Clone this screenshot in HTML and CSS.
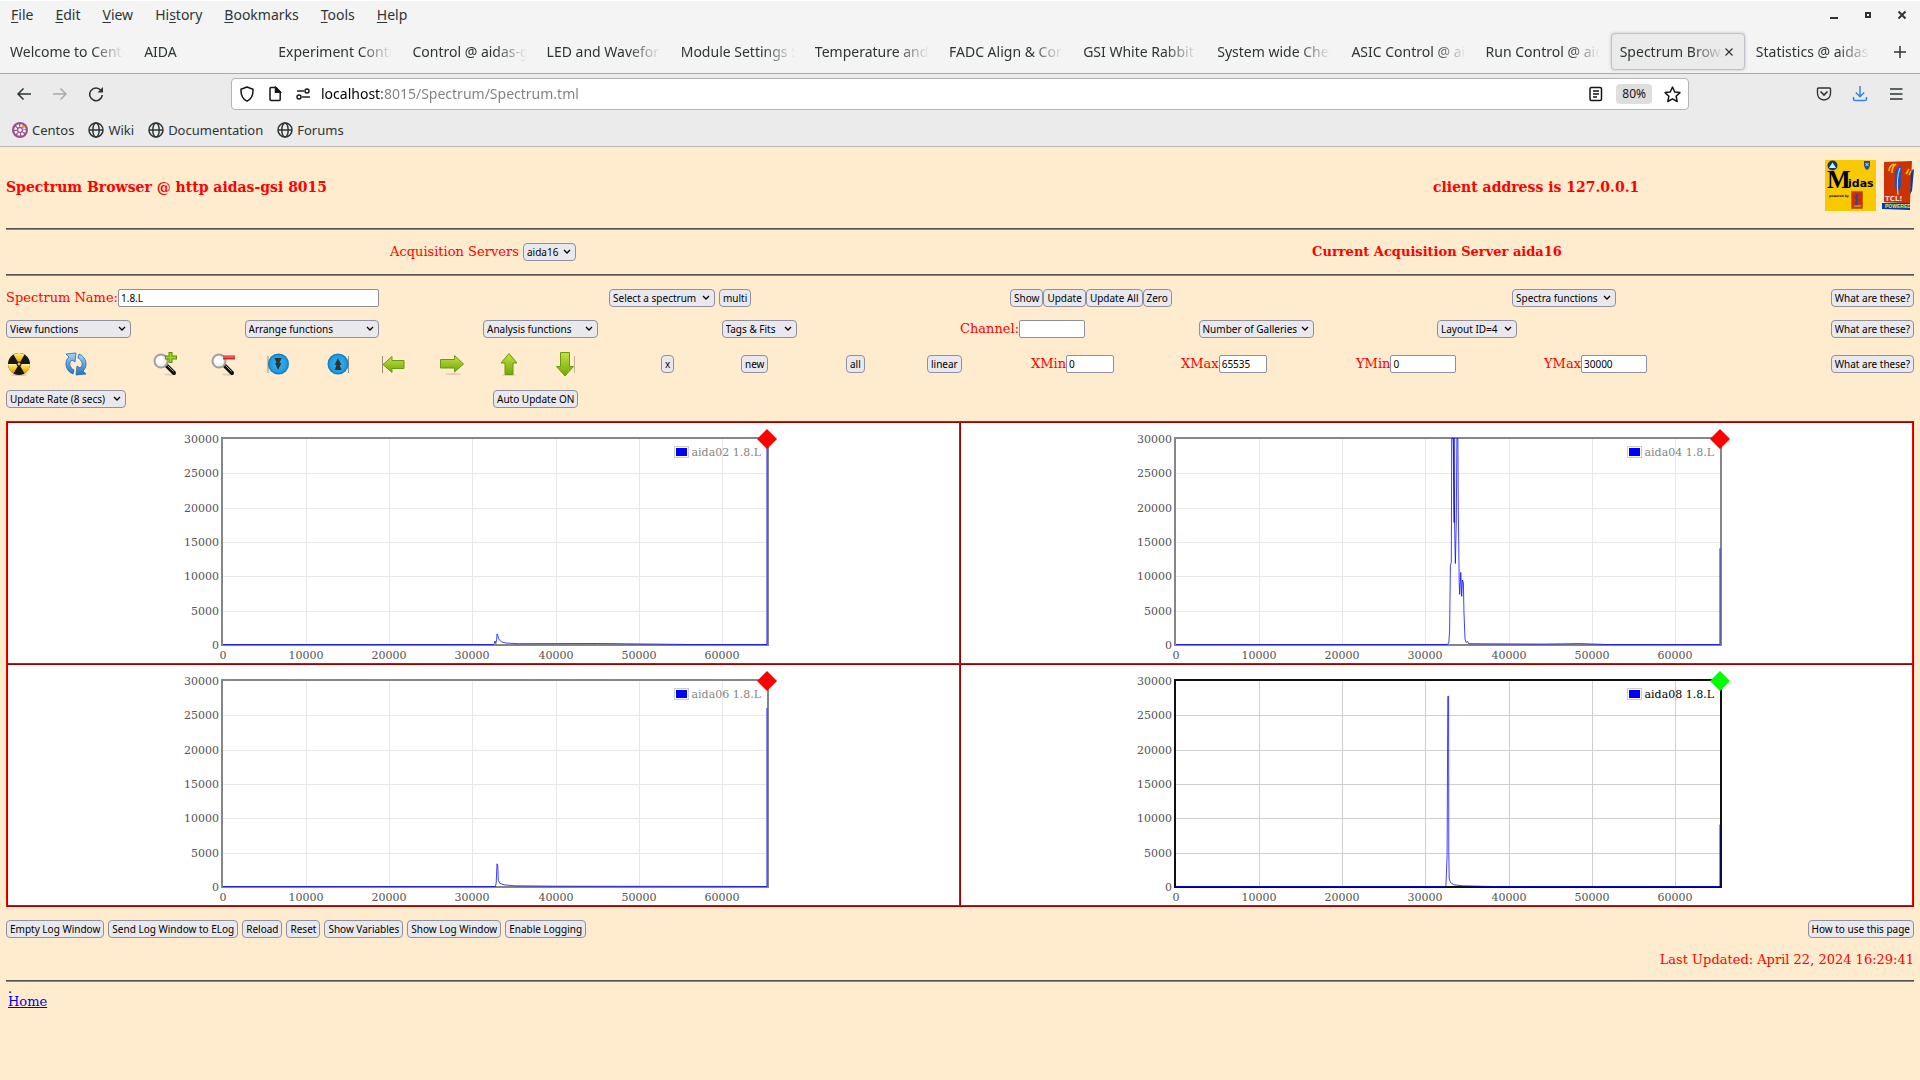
FILE: index.html
```html
<!DOCTYPE html>
<html lang="en">
<head>
<meta charset="utf-8">
<title>Spectrum Browser @ aidas-gsi</title>
<link rel="stylesheet" href="styles.css">
</head>
<body>
<svg width="0" height="0" class="defs" aria-hidden="true">
  <defs>
    <symbol id="globe" viewBox="0 0 16 16"><g fill="none" stroke="#2e3436" stroke-width="1.5"><circle cx="8" cy="8" r="7"/><ellipse cx="8" cy="8" rx="3.2" ry="7"/><path d="M1 8h14"/></g></symbol>
    <linearGradient id="green" x1="0" y1="0" x2="0" y2="1"><stop offset="0" stop-color="#c4e23c"/><stop offset="1" stop-color="#6fa80c"/></linearGradient>
    <linearGradient id="blue" x1="0" y1="0" x2="0" y2="1"><stop offset="0" stop-color="#a4d6fa"/><stop offset="1" stop-color="#2472c0"/></linearGradient>
    <radialGradient id="disc"><stop offset="0" stop-color="#35b5f2"/><stop offset=".75" stop-color="#1f9fe4"/><stop offset="1" stop-color="#1473b4"/></radialGradient>
    <linearGradient id="amber" x1="0" y1="0" x2="0" y2="1"><stop offset="0" stop-color="#fff0a0"/><stop offset=".5" stop-color="#f7c51b"/><stop offset="1" stop-color="#d99a08"/></linearGradient>
    <symbol id="lens" viewBox="0 0 24 24"><ellipse cx="17" cy="22.5" rx="6" ry="1" fill="#000" opacity=".12"/><path d="M14 14l7 7" stroke="#111" stroke-width="4" stroke-linecap="round"/><path d="M14.500 13.500l6 6" stroke="#aaa" stroke-width="1"/><circle cx="8" cy="9" r="6.500" fill="#f2f2f2" stroke="#a3a09c" stroke-width="2"/><circle cx="7" cy="8" r="3.500" fill="#fff"/></symbol>
  </defs>
</svg>

<header class="chrome">
  <div class="menubar">
    <nav class="menus">
      <button><u>F</u>ile</button><button><u>E</u>dit</button><button><u>V</u>iew</button><button>Hi<u>s</u>tory</button><button><u>B</u>ookmarks</button><button><u>T</u>ools</button><button><u>H</u>elp</button>
    </nav>
    <div class="window-buttons">
      <button aria-label="Minimize"><svg width="10" height="10"><path d="M1 8h8" stroke="#2e3436" stroke-width="2"/></svg></button>
      <button aria-label="Restore"><svg width="10" height="10"><path d="M3 3h4v4h-4z" fill="none" stroke="#2e3436" stroke-width="2"/></svg></button>
      <button aria-label="Close window"><svg width="10" height="10"><path d="M1.500 1.500l7 7m0-7l-7 7" stroke="#2e3436" stroke-width="2"/></svg></button>
    </div>
  </div>
  <div class="tabs">
    <button class="tab"><span>Welcome to CentOS</span></button>
    <button class="tab"><span>AIDA</span></button>
    <button class="tab"><span>Experiment Control</span></button>
    <button class="tab"><span>Control @ aidas-gsi</span></button>
    <button class="tab"><span>LED and Waveform</span></button>
    <button class="tab"><span>Module Settings S</span></button>
    <button class="tab"><span>Temperature and s</span></button>
    <button class="tab"><span>FADC Align &amp; Cont</span></button>
    <button class="tab"><span>GSI White Rabbit T</span></button>
    <button class="tab"><span>System wide Check</span></button>
    <button class="tab"><span>ASIC Control @ aid</span></button>
    <button class="tab"><span>Run Control @ aida</span></button>
    <button class="tab active"><span>Spectrum Brows</span><svg width="10" height="10"><path d="M1.500 1.500l7 7m0-7l-7 7" stroke="#2e3436" stroke-width="1.200"/></svg></button>
    <button class="tab"><span>Statistics @ aidas-</span></button>
    <button class="new-tab" aria-label="New tab"><svg width="14" height="14"><path d="M7 1v12M1 7h12" stroke="#2e3436" stroke-width="1.500"/></svg></button>
  </div>
  <div class="navbar">
    <div class="nav-left">
      <button aria-label="Back"><svg width="16" height="16" fill="none" stroke="#2e3436" stroke-width="1.500"><path d="M15 8H2M7.500 2.500L2 8l5.500 5.500"/></svg></button>
      <button aria-label="Forward"><svg width="16" height="16" fill="none" stroke="#a9abac" stroke-width="1.500"><path d="M1 8h13M8.500 2.500L14 8l-5.500 5.500"/></svg></button>
      <button aria-label="Reload"><svg width="16" height="16" fill="none" stroke="#2e3436" stroke-width="1.600"><path d="M13 4.500A6.300 6.300 0 1 0 14.300 9"/><path d="M9.500 6.500h5.500V1z" fill="#2e3436" stroke="none"/></svg></button>
    </div>
    <div class="urlbar">
      <svg width="16" height="16" fill="none" stroke="#15141a" stroke-width="1.500"><path d="M8 1L14 3.300C14.300 9 12.500 13 8 15.200C3.500 13 1.700 9 2 3.300Z" stroke-linejoin="round"/></svg>
      <svg width="16" height="16" fill="none" stroke="#15141a" stroke-width="1.500"><path d="M3 2.500q0-1 1-1h5l4.200 4.200v7.800q0 1-1 1H4q-1 0-1-1z"/><path d="M8.500 1.500v4.700h4.700z" fill="#15141a"/></svg>
      <svg width="16" height="16" fill="none" stroke="#15141a" stroke-width="1.400"><circle cx="12" cy="5" r="2"/><path d="M2 5h7"/><circle cx="4" cy="11" r="2"/><path d="M7 11h8"/></svg>
      <input class="url" type="text" aria-label="Address" value="localhost:8015/Spectrum/Spectrum.tml">
      <svg width="16" height="16" fill="none" stroke="#15141a" stroke-width="1.500"><rect x="2" y="1.500" width="11.500" height="13" rx="1.500"/><path d="M5 5h6M5 8h6M5 11h4" stroke-width="1.300"/></svg>
      <button class="zoom">80%</button>
      <svg width="17" height="17" viewBox="0 0 16 16" fill="none" stroke="#15141a" stroke-width="1.400" stroke-linejoin="round"><path d="M8 1l2.100 4.600 4.900.6-3.600 3.400 1 5L8 12.100l-4.400 2.500 1-5L1 6.200l4.900-.6z"/></svg>
    </div>
    <div class="nav-right">
      <button aria-label="Save to Pocket"><svg width="16" height="16" fill="none" stroke="#2e3436" stroke-width="1.400"><path d="M2.500 2h11q1 0 1 1v4.500c0 3.500-2.500 6.500-6.500 6.500S1.500 11 1.500 7.500V3q0-1 1-1z"/><path d="M5 6l3 3 3-3" stroke-width="1.700" stroke-linecap="round"/></svg></button>
      <button aria-label="Downloads"><svg width="16" height="16" fill="none" stroke="#3584e4" stroke-width="1.500"><path d="M8 0v10.500M3.800 6.500L8 10.700l4.200-4.200M1.500 11v2q0 1.500 1.500 1.500h10q1.500 0 1.500-1.500v-2"/></svg></button>
      <button aria-label="Application menu"><svg width="16" height="16" stroke="#2e3436" stroke-width="1.500"><path d="M2 3h12.500M2 8h12.500M2 13h12.500"/></svg></button>
    </div>
  </div>
  <nav class="bookmarks">
    <a href="#centos"><svg width="16" height="16"><circle cx="8" cy="8" r="8" fill="#a14f8c"/><circle cx="8" cy="8" r="4.500" fill="none" stroke="#fff" stroke-width="2.600" stroke-dasharray="2.200 1.300"/><circle cx="8" cy="8" r="1.800" fill="#fff"/><path d="M10 3.500l2.500 2.500" stroke="#efa724" stroke-width="2"/></svg>Centos</a>
    <a href="#wiki"><svg width="16" height="16"><use href="#globe"/></svg>Wiki</a>
    <a href="#docs"><svg width="16" height="16"><use href="#globe"/></svg>Documentation</a>
    <a href="#forums"><svg width="16" height="16"><use href="#globe"/></svg>Forums</a>
  </nav>
</header>

<main class="page">
  <div class="masthead">
    <h1>Spectrum Browser @ http aidas-gsi 8015</h1>
    <h2>client address is 127.0.0.1</h2>
    <div class="logos">
      <svg width="51" height="51" viewBox="0 0 51 51">
        <rect width="51" height="51" fill="#f9c900"/>
        <circle cx="7.500" cy="5.500" r="5" fill="#123a70"/><path d="M4 8l3.500-5.500L11 8z" fill="#dceaf5"/>
        <path d="M39 1h6v5q-1 3-3 4-2-1-3-4z" fill="#24508c"/><path d="M40.500 3l3 3m0-3l-3 3" stroke="#dceaf5"/>
        <text x="2" y="28" class="logo-m">M</text><text x="23" y="27" class="logo-rest">idas</text>
        <text x="4" y="37" class="logo-small">powered by</text>
        <rect x="26.500" y="31.500" width="11" height="17" fill="#cf3000" stroke="#a05000" stroke-width=".5"/><path d="M33 34q-3 2-1 6-1 3-1 6" fill="none" stroke="#2349a8" stroke-width="2"/><path d="M29 46h7" stroke="#f9c900"/>
      </svg>
      <svg width="32" height="51" viewBox="0 0 32 51">
        <path d="M0 43l28-1v8L0 49z" fill="#0b3c9c"/><path d="M2 2l28-1-2 42-26-1z" fill="#cd3301"/>
        <path d="M29 11l3-2-2 22-2 3z" fill="#0b3c9c"/>
        <path d="M7 11q0-5 5-7M10 13q0-7 4-9M24 14l3-5M27 15l2-4" fill="none" stroke="#f5c51c" stroke-width="1.500"/>
        <path d="M19 6q-8 3-6 12-2 9 3 14 4-6 3-12 1-8 0-14z" fill="#2355b5"/><path d="M18 8q-4 10-2 27" fill="none" stroke="#cfe0f5" stroke-width="1"/>
        <text x="3" y="41" class="logo-tcl">TCL!</text><text x="3" y="48" class="logo-powered">POWERED</text>
      </svg>
    </div>
  </div>
  <hr>
  <div class="servers">
    <div><label for="server">Acquisition Servers</label> <select id="server"><option>aida16</option></select></div>
    <strong>Current Acquisition Server aida16</strong>
  </div>
  <hr>
  <div class="row row-name">
    <div><label for="name">Spectrum Name:</label><input id="name" class="w-name" type="text" value="1.8.L"></div>
    <div class="spaced"><select class="w-spectrum" aria-label="Spectrum"><option>Select a spectrum</option></select><button>multi</button></div>
    <div><button>Show</button><button>Update</button><button>Update All</button><button>Zero</button></div>
    <div><select class="w-spectra" aria-label="Spectra functions"><option>Spectra functions</option></select></div>
    <div class="end"><button>What are these?</button></div>
  </div>
  <div class="row row-functions">
    <div><select class="w-view" aria-label="View"><option>View functions</option></select></div>
    <div><select class="w-arrange" aria-label="Arrange"><option>Arrange functions</option></select></div>
    <div><select class="w-analysis" aria-label="Analysis"><option>Analysis functions</option></select></div>
    <div><select class="w-tags" aria-label="Tags and fits"><option>Tags &amp; Fits</option></select></div>
    <div><label for="channel">Channel:</label><input id="channel" class="w-medium" type="text"></div>
    <div><select class="w-galleries" aria-label="Galleries"><option>Number of Galleries</option></select></div>
    <div><select class="w-layout" aria-label="Layout"><option>Layout ID=4</option></select></div>
    <div class="end"><button>What are these?</button></div>
  </div>
  <div class="row row-tools">
    <div><button class="icon" aria-label="Zero spectra"><svg width="24" height="24"><ellipse cx="13" cy="23" rx="8" ry="1" fill="#000" opacity=".15"/><g transform="translate(1 0)"><circle cx="12" cy="12" r="11" fill="#181818"/><g fill="url(#amber)"><path d="M12 12L6.500 2.500a11 11 0 0 1 11 0z"/><path d="M12 12H1a11 11 0 0 0 5.500 9.500z"/><path d="M12 12h11a11 11 0 0 1-5.500 9.500z"/></g><circle cx="12" cy="12" r="2.500" fill="#181818"/><circle cx="12" cy="12" r="1.400" fill="#f7c51b"/></g></svg></button></div>
    <div><button class="icon" aria-label="Refresh"><svg width="24" height="24" fill="url(#blue)" stroke="#2468ae" stroke-width=".8"><path d="M9 22C1 19 0 9 5 5L2 2l10-1-1 9-3-2c-4 3-2 8 2 10z"/><path d="M15 2c8 3 9 13 4 17l3 3-10 1 1-9 3 2c4-3 2-8-2-10z"/></svg></button></div>
    <div><button class="icon" aria-label="Zoom in"><svg width="24" height="24"><use href="#lens"/><path d="M17.500 0v11M12 5.500h12" stroke="#5c8e0a" stroke-width="4"/><path d="M17.500 1v9M13 5.500h10" stroke="#a4d41c" stroke-width="2"/></svg></button></div>
    <div><button class="icon" aria-label="Zoom out"><svg width="24" height="24"><use href="#lens"/><path d="M12 5.500h12" stroke="#c03030" stroke-width="4"/><path d="M12 5h12" stroke="#ef5350" stroke-width="2"/></svg></button></div>
    <div><button class="icon" aria-label="Compress"><svg width="24" height="24"><path d="M2 4v17" stroke="#9a8c78"/><circle cx="12.500" cy="12" r="10.500" fill="url(#disc)"/><path d="M8.500 6h7l-2 5h2l-3.500 7-3-7h1.500z" fill="#333"/></svg></button></div>
    <div><button class="icon" aria-label="Expand"><svg width="24" height="24"><path d="M22.500 4v17" stroke="#9a8c78"/><circle cx="12" cy="12" r="10.500" fill="url(#disc)"/><path d="M8.500 18h7l-2-5h2L12 6l-3.500 7h2z" fill="#333"/></svg></button></div>
    <div><button class="icon" aria-label="Move left"><svg width="24" height="24"><path d="M1.500 4v17" stroke="#9a8c78"/><path d="M2 12.500l9-8v4h12v8H11v4z" fill="url(#green)" stroke="#6a980e"/></svg></button></div>
    <div><button class="icon" aria-label="Move right"><svg width="24" height="24"><ellipse cx="13" cy="22" rx="8" ry="1" fill="#000" opacity=".12"/><path d="M23.500 12l-9-8.500v4H.5v8.500h14v4z" fill="url(#green)" stroke="#6a980e"/></svg></button></div>
    <div><button class="icon" aria-label="Move up"><svg width="24" height="24"><ellipse cx="13" cy="23" rx="7" ry="1" fill="#000" opacity=".12"/><path d="M13 1.500l8 9.500h-4v11.500H9V11H5z" fill="url(#green)" stroke="#6a980e"/></svg></button></div>
    <div><button class="icon" aria-label="Move down"><svg width="24" height="24"><path d="M21.500 4v17" stroke="#c3b49c"/><path d="M12 24l8.500-9.500h-4V.5h-9v14h-4z" fill="url(#green)" stroke="#6a980e"/></svg></button></div>
    <div><button>x</button></div>
    <div><button>new</button></div>
    <div><button>all</button></div>
    <div><button>linear</button></div>
    <div><label for="xmin">XMin</label><input id="xmin" class="w-small" type="text" value="0"></div>
    <div><label for="xmax">XMax</label><input id="xmax" class="w-small" type="text" value="65535"></div>
    <div><label for="ymin">YMin</label><input id="ymin" class="w-medium" type="text" value="0"></div>
    <div><label for="ymax">YMax</label><input id="ymax" class="w-medium" type="text" value="30000"></div>
    <div class="end"><button>What are these?</button></div>
  </div>
  <div class="row row-update">
    <div><select class="w-rate" aria-label="Update rate"><option>Update Rate (8 secs)</option></select></div>
    <div><button>Auto Update ON</button></div>
  </div>

  <section class="gallery">
    <div class="cell" data-name="aida02 1.8.L" data-line="0,0 32500,0 32600,100 32700,500 32800,150 32900,700 32960,1550 33050,1300 33200,700 33500,400 34000,220 35500,120 45000,140 52000,60 56000,0 65400,0 65400,30000"></div>
    <div class="cell" data-name="aida04 1.8.L" data-line="0,0 32600,0 32800,200 32900,2000 33000,11500 33100,12000 33150,30000 33350,30000 33400,17800 33500,17800 33500,30000 33350,30000 33550,14000 33600,11800 33700,18000 33780,30000 33900,30000 33950,19500 34050,9000 34120,7300 34250,10500 34350,7000 34450,9400 34560,9000 34620,5000 34750,800 34900,300 35050,450 35200,120 44000,60 48500,130 52000,0 65400,0 65400,14000"></div>
    <div class="cell" data-name="aida06 1.8.L" data-line="0,0 32750,0 32850,500 32950,3300 33050,3000 33100,900 33300,450 33800,250 35000,100 40000,50 65400,0 65400,26000"></div>
    <div class="cell selected" data-name="aida08 1.8.L" data-line="0,0 32450,0 32550,3000 32600,4500 32680,27700 32780,27700 32800,5000 32850,1200 33000,600 33400,250 34500,100 38000,0 65400,0 65400,9000"></div>
  </section>

  <div class="log-bar">
    <button>Empty Log Window</button><button>Send Log Window to ELog</button><button>Reload</button><button>Reset</button><button>Show Variables</button><button>Show Log Window</button><button>Enable Logging</button><button class="help">How to use this page</button>
  </div>
  <p class="updated">Last Updated: April 22, 2024 16:29:41</p>
  <hr>
  <footer><p class="dot">.</p><a href="#home">Home</a></footer>
</main>
<script src="charts.js"></script>
</body>
</html>
```

FILE: styles.css
```css
* { box-sizing: border-box; }
body {
  margin: 0;
  min-height: 100vh;
  background: #ffebcd;
  color: #ff0000;
  font: 13px/16px "DejaVu Serif", serif;
}
button, select, input { font: 10px/14px "Noto Sans", sans-serif; color: #000; margin: 0; }
svg { display: block; flex: none; }
.defs { position: absolute; }

/* browser window */
.chrome { background: #ebebeb; border-bottom: 1px solid #b4b4b4; color: #2e3436; font: 14px/18px "Noto Sans", sans-serif; }
.chrome button { font: inherit; color: inherit; background: none; border: 0; padding: 0; }
.menubar { display: flex; justify-content: space-between; height: 31px; padding: 0 13px 2px 11px; background: #f4f4f4; border-top: 1px solid #fff; }
.menus { display: flex; gap: 22px; }
.menus u { text-underline-offset: 2px; }
.window-buttons { display: flex; gap: 24px; align-items: center; }
.tabs { display: flex; height: 43px; background: #f4f4f4; border-bottom: 1px solid #aaa; }
.chrome .tab { flex: 1 1 0; min-width: 0; display: flex; align-items: center; margin: 2px 1px 3px; padding: 0 8px; border: 1px solid transparent; border-radius: 4px; text-align: left; }
.tab span { flex: 1; overflow: hidden; white-space: nowrap; -webkit-mask-image: linear-gradient(to left, transparent, #000 32px); mask-image: linear-gradient(to left, transparent, #000 32px); }
.chrome .tab.active { padding-right: 10px; background: #ebebeb; border-color: #c3c0ca; box-shadow: 0 0 3px #bbb; }
.new-tab { width: 40px; display: flex; align-items: center; justify-content: center; }
.navbar { display: flex; align-items: center; height: 40px; }
.nav-left { display: flex; gap: 20px; width: 231px; padding-left: 16px; }
.urlbar { flex: 1; display: flex; align-items: center; gap: 12px; height: 32px; padding: 0 7px; background: #fff; border: 1px solid #b4b4b4; border-radius: 4px; }
.url { flex: 1; min-width: 0; border: 0; padding: 0; font-size: 14px; line-height: 20px; margin-right: 8px; margin-left: -2px; color: transparent; background: linear-gradient(to right, #000 61px, #7f7f7f 61px); -webkit-background-clip: text; background-clip: text; }
.chrome .zoom { padding: 0 6px; border-radius: 4px; background: #dedede; color: #15141a; font-size: 12px; line-height: 20px; }
.nav-right { display: flex; gap: 20px; width: 231px; padding-right: 16px; justify-content: flex-end; }
.bookmarks { display: flex; gap: 14px; height: 32px; align-items: center; padding: 0 0 1px 12px; font-size: 13px; }
.bookmarks a { display: flex; align-items: center; gap: 4px; color: inherit; text-decoration: none; }

/* page */
.page { padding: 13px 6px 0; }
h1, h2 { margin: 0; font-size: 14px; line-height: 18px; }
hr { height: 2px; margin: 0; border: 0; border-top: 1px solid #555; background: #858585; }
.masthead { display: grid; grid-template-columns: 1427fr 240fr 241fr; align-items: center; height: 68px; padding-bottom: 14px; }
.logos { display: flex; gap: 6px; justify-content: flex-end; align-self: start; }
.logo-m { font: bold 25px "Liberation Serif", serif; }
.logo-rest { font: bold 11px "DejaVu Sans", sans-serif; }
.logo-small { font: bold 3px "DejaVu Sans", sans-serif; }
.logo-tcl { font: bold 7px "DejaVu Sans", sans-serif; fill: #f3d7c8; }
.logo-powered { font: bold 5px "Liberation Sans", sans-serif; fill: #f0e860; }
.servers { display: grid; grid-template-columns: 1fr 1fr; align-items: center; justify-items: center; height: 44px; }

.page button, .page select, .page input { height: 18px; border: 1px solid #8f8f9d; vertical-align: middle; }
.page button { padding: 0 3px; border-radius: 4px; background: #e9e9ed; white-space: nowrap; }
.page select { appearance: none; padding: 0 16px 0 3px; border-radius: 4px; background: #e9e9ed url("data:image/svg+xml,%3Csvg xmlns='http://www.w3.org/2000/svg' width='8' height='6'%3E%3Cpath d='M1 1l3 3 3-3' fill='none' stroke='%23000' stroke-width='1.300'/%3E%3C/svg%3E") no-repeat right 4px center; }
.page input { padding: 0 2px; border-radius: 2px; background: #fff; }
.page .icon { width: 24px; height: 24px; border: 0; padding: 0; background: none; }
.icon svg { overflow: visible; }

.row { display: grid; align-items: center; }
.row > div { display: flex; align-items: center; min-width: 0; white-space: nowrap; }
.row > .spaced { gap: 4px; }
.row > .end { justify-content: flex-end; }
.row-name { grid-template-columns: 603fr 401fr 502fr 201fr 201fr; height: 44px; }
.row-functions { grid-template-columns: repeat(8, 1fr); height: 18px; }
.row-tools { grid-template-columns: 58fr 89fr 58fr 55fr 60fr 55fr 59fr 56fr 57fr 108fr 80fr 105fr 81fr 104fr 150fr 175fr 188fr 185fr 185fr; height: 52px; }
.row-update { grid-template-columns: 487fr 1421fr; height: 18px; }
.w-name { width: 261px; }
.w-small { width: 48px; }
.w-medium { width: 66px; }
.w-spectrum { width: 106px; }
.w-spectra { width: 104px; }
.w-view { width: 125px; }
.w-arrange { width: 134px; }
.w-analysis { width: 115px; }
.w-tags { width: 75px; }
.w-galleries { width: 115px; }
.w-layout { width: 80px; }
.w-rate { width: 120px; }

.gallery { display: grid; grid-template-columns: 1fr 1fr; margin-top: 13px; border: 1px solid; border-color: #ff0000 #a00000 #a00000 #ff0000; }
.cell { display: flex; justify-content: center; background: #fff; border: 1px solid; border-color: #a00000 #ff0000 #ff0000 #a00000; }
.cell svg { flex: 0 1 601px; min-width: 0; }
.cell text { font: 11px "DejaVu Serif", serif; fill: #545454; }
.cell .legend { fill: #858585; }
.cell.selected .legend { fill: #000; }
.grid { stroke: #e8e8e8; }
.selected .grid { stroke: #cfcfcf; }
.frame { fill: none; stroke: #868686; stroke-width: 2; }
.selected .frame { stroke: #101010; }
.trace { fill: none; stroke: #0000ff; stroke-opacity: .75; stroke-linejoin: round; }
.swatch { fill: #fff; stroke: #ccc; }
.swatch-color { fill: #0000ff; }
.marker { fill: #ff0000; }
.selected .marker { fill: #00ff00; }

.log-bar { display: flex; gap: 4px; margin-top: 13px; }
.log-bar .help { margin-left: auto; }
.updated { margin: 14px 0 12px; text-align: right; }
footer { padding: 1px 2px 0; line-height: 14px; }
.dot { margin: 0; color: #000; line-height: 12px; }
footer a { color: #0000ee; }
```

FILE: charts.js
```javascript
const LEFT = 40, TOP = 16, BOTTOM = 222, RIGHT = 585;
const px = v => LEFT + v * (RIGHT - LEFT) / 65535;
const py = v => BOTTOM - v * (BOTTOM - TOP) / 30000;

document.querySelectorAll('.cell').forEach(cell => {
  let s = '';
  for (let v = 10000; v <= 60000; v += 10000) {
    const x = Math.round(px(v)) + 0.5;
    s += `<path class="grid" d="M${x} ${TOP}V${BOTTOM}"/>`;
  }
  for (let v = 5000; v < 30000; v += 5000) {
    const y = Math.round(py(v)) + 0.5;
    s += `<path class="grid" d="M${LEFT} ${y}H${RIGHT}"/>`;
  }
  s += `<rect class="frame" x="${LEFT - 1}" y="${TOP - 1}" width="${RIGHT - LEFT + 1}" height="${BOTTOM - TOP + 1}"/>`;
  const points = cell.dataset.line.split(' ').map(p => {
    const [x, y] = p.split(',').map(Number);
    return px(x).toFixed(1) + ',' + (py(y) - 0.5).toFixed(1);
  }).join(' ');
  s += `<polyline class="trace" points="${points}"/>`;
  for (let v = 0; v <= 60000; v += 10000) {
    s += `<text x="${Math.round(px(v))}" y="236" text-anchor="middle">${v}</text>`;
  }
  for (let v = 0; v <= 30000; v += 5000) {
    s += `<text x="36" y="${Math.round(py(v)) + 4}" text-anchor="end">${v}</text>`;
  }
  s += '<rect class="swatch" x="491.5" y="23.5" width="14" height="11"/><rect class="swatch-color" x="493" y="25" width="11" height="8"/>';
  s += `<text class="legend" x="578" y="33" text-anchor="end">${cell.dataset.name}</text>`;
  s += `<path class="marker" d="M${RIGHT - 1} 6l10 10-10 10-10-10z"/>`;
  cell.innerHTML = `<svg viewBox="0 0 601 240" height="240">${s}</svg>`;
});
```
